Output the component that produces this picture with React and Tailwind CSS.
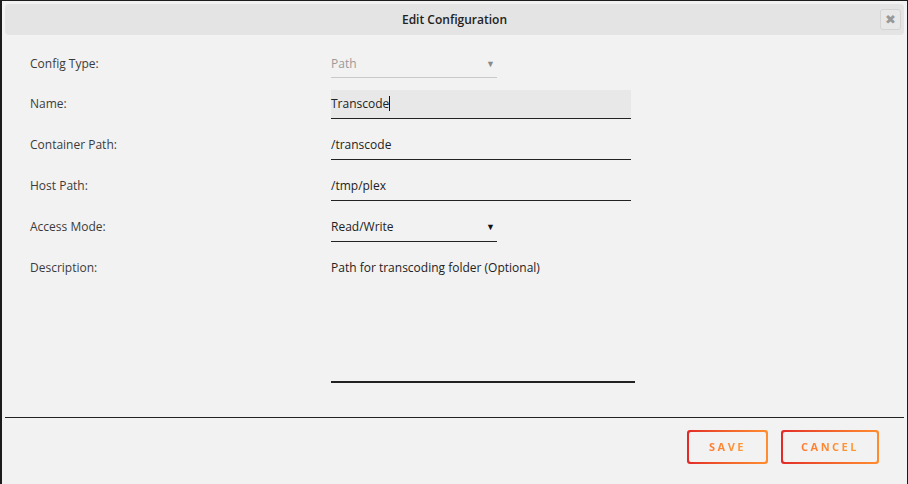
import React from "react";

const font = { fontFamily: '"Open Sans", "Noto Sans", sans-serif' };

function Row({ label, children, className = "" }) {
  return (
    <div className={"flex " + className}>
      <div className="w-[301px] shrink-0 flex items-center h-[28px] text-[12px] text-[#3b3b3b]">{label}</div>
      {children}
    </div>
  );
}

function GradButton({ children, w }) {
  return (
    <div className={"rounded-[3px] p-[2px] bg-gradient-to-r from-[#e22828] to-[#ff8d2f] " + w}>
      <div className="h-[30px] rounded-[2px] bg-[#f2f2f2] flex items-center justify-center">
        <span className="text-[11px] font-bold tracking-[2.5px] bg-gradient-to-r from-[#ff7a30] to-[#ff9a35] bg-clip-text text-transparent">
          {children}
        </span>
      </div>
    </div>
  );
}

export default function App() {
  return (
    <div style={font} className="w-[908px] h-[484px] bg-[#f2f2f2] border-t border-r border-[#1c1c1c] border-l-2 border-l-[#1c1c1c] overflow-hidden flex flex-col">
      <div className="mx-[3px] mt-[3px] h-[31px] rounded-[4px] bg-[#e4e4e4] relative flex items-center justify-center">
        <span className="text-[12px] font-semibold text-[#222]">Edit Configuration</span>
        <div className="absolute right-[3px] top-[5px] w-[21px] h-[21px] rounded-[3px] border border-[#d4d4d4] bg-[#e8e8e8] flex items-center justify-center text-[13px] leading-none text-[#999]">✖</div>
      </div>

      <div className="pl-[28px] pt-[15px] flex flex-col gap-[12px]">
        <Row label="Config Type:">
          <div className="w-[166px] h-[28px] border-b border-[#c9c9c9] flex items-center justify-between text-[12px] text-[#9a9a9a]">
            <span>Path</span>
            <span className="text-[9px] mr-[2px] text-[#8a8a8a]">▼</span>
          </div>
        </Row>
        <Row label="Name:">
          <div className="w-[300px] h-[29px] border-b border-[#222] bg-[#e8e8e8] flex items-center pb-[1px] text-[12px] text-[#222]">
            <span>Transcode</span>
            <span className="w-px h-[15px] bg-[#111]" />
          </div>
        </Row>
        <Row label="Container Path:">
          <div className="w-[300px] h-[29px] border-b border-[#222] flex items-center pb-[1px] text-[12px] text-[#222]">/transcode</div>
        </Row>
        <Row label="Host Path:">
          <div className="w-[300px] h-[29px] border-b border-[#222] flex items-center pb-[1px] text-[12px] text-[#222]">/tmp/plex</div>
        </Row>
        <Row label="Access Mode:">
          <div className="w-[166px] h-[29px] border-b border-[#222] flex items-center justify-between pb-[1px] text-[12px] text-[#222]">
            <span>Read/Write</span>
            <span className="text-[9px] mr-[2px] text-[#111]">▼</span>
          </div>
        </Row>
        <Row label="Description:">
          <div className="w-[304px] h-[129px] border-b-2 border-[#222] text-[12px] text-[#222] pt-[5px]">
            Path for transcoding folder (Optional)
          </div>
        </Row>
      </div>

      <div className="mx-[3px] mt-[34px] border-t border-[#222]" />

      <div className="flex justify-end gap-[13px] pr-[28px] pt-[12px]">
        <GradButton w="w-[81px]">SAVE</GradButton>
        <GradButton w="w-[98px]">CANCEL</GradButton>
      </div>
    </div>
  );
}
